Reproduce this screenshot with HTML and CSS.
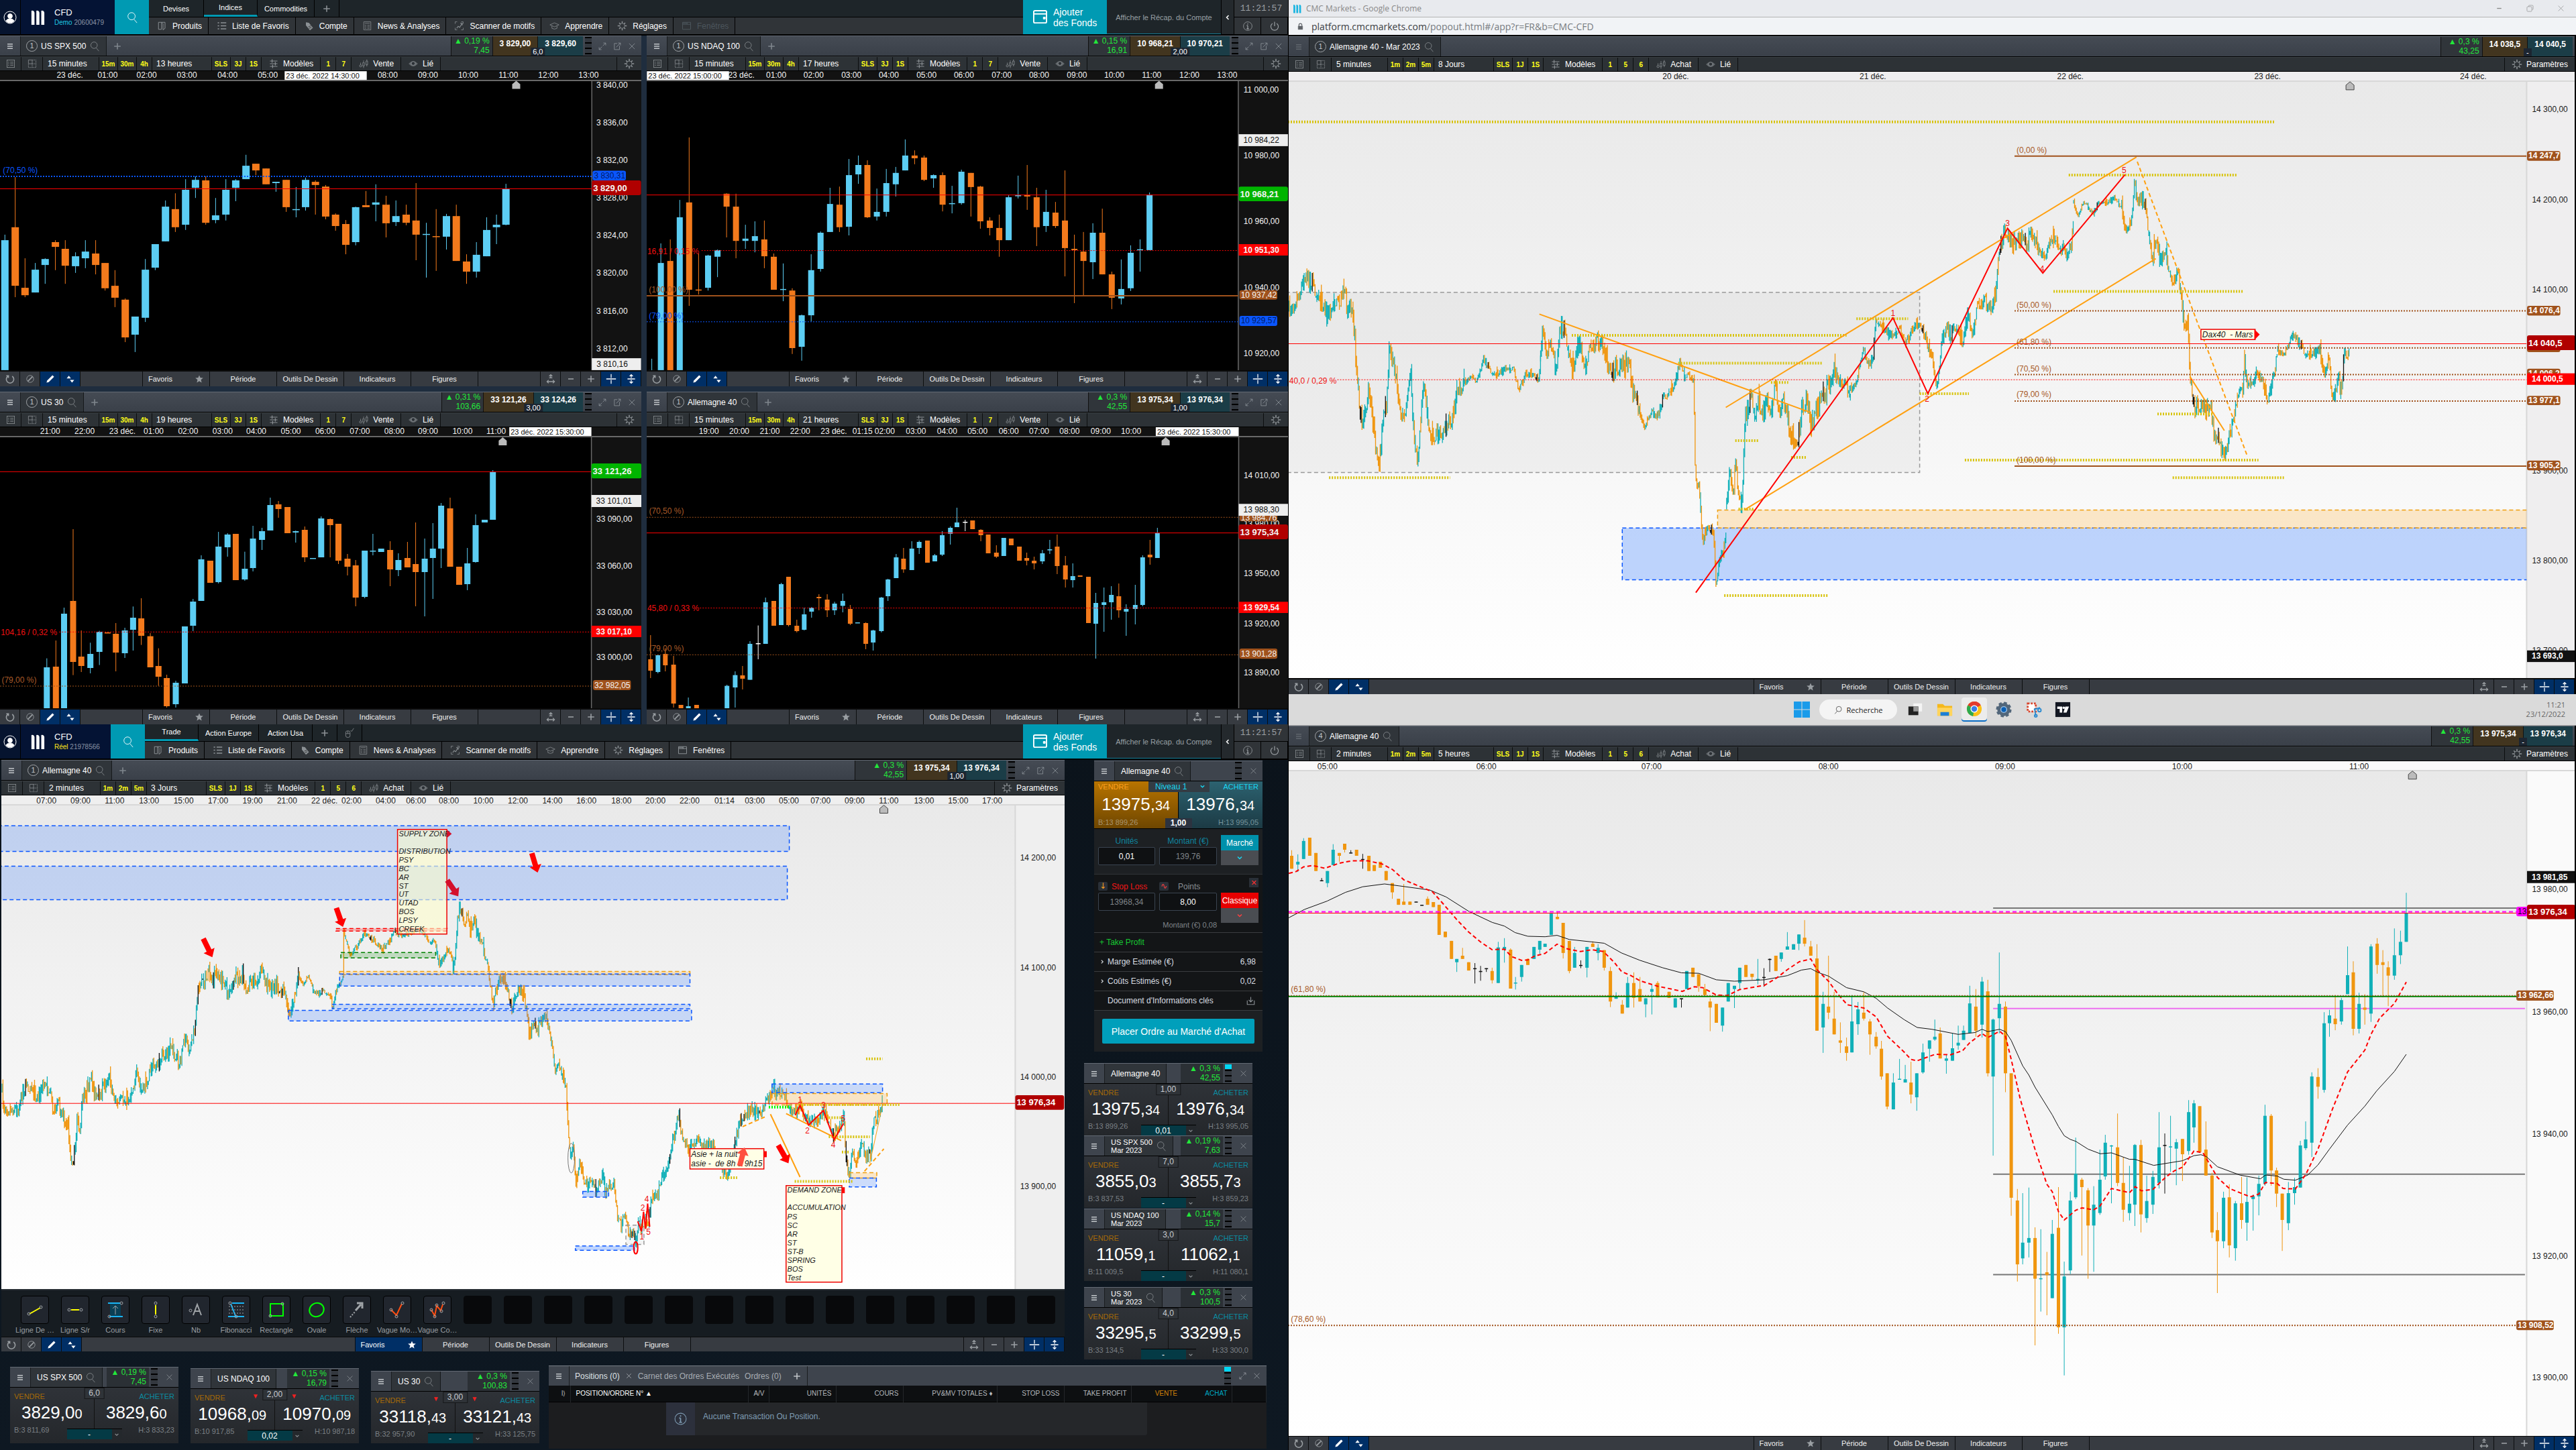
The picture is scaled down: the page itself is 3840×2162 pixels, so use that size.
FILE: index.html
```html
<!DOCTYPE html>
<html lang="fr">
<head>
<meta charset="utf-8">
<meta name="viewport" content="width=device-width, initial-scale=1">
<title>CMC Markets - CFD</title>
<link rel="stylesheet" href="styles.css">
</head>
<body>
<svg class="sprite" aria-hidden="true">
  <symbol id="menu" viewBox="0 0 20 20"><path d="M5 6h10M5 10h10M5 14h10" stroke-width="2"/></symbol>
  <symbol id="search" viewBox="0 0 20 20"><circle cx="9" cy="8" r="6"/><path d="M13 13l5 6"/></symbol>
  <symbol id="plus" viewBox="0 0 20 20"><path d="M10 4v12M4 10h12" stroke-width="2"/></symbol>
  <symbol id="minus" viewBox="0 0 20 20"><path d="M5 10h10" stroke-width="2"/></symbol>
  <symbol id="user" viewBox="0 0 20 20"><circle cx="10" cy="10" r="9"/><circle cx="10" cy="8" r="3.4" fill="currentColor"/><path d="M4 15c2-4 10-4 12 0c-3 4-9 4-12 0z" fill="currentColor"/></symbol>
  <symbol id="logo" viewBox="0 0 24 26"><path d="M2 2q4-1 5 3v20H2zM10 2q4-1 5 3v20h-5zM18 2q4-1 5 3v20h-5z" fill="currentColor" stroke="none"/></symbol>
  <symbol id="list" viewBox="0 0 20 20"><rect x="3" y="3" width="14" height="14"/><path d="M5 7h2M9 7h6M5 10h2M9 10h6M5 13h2M9 13h6"/></symbol>
  <symbol id="grid" viewBox="0 0 20 20"><path d="M3 3h7v7H3z"/><path d="M10 3h7v14H3v-7M10 10h7M10 10v7" stroke-dasharray="2 1"/></symbol>
  <symbol id="sliders" viewBox="0 0 20 20"><path d="M3 5h14M3 10h14M3 15h14M7 2v6M13 7v6M8 12v6" stroke-width="1.5"/></symbol>
  <symbol id="bars" viewBox="0 0 20 20"><circle cx="4.500" cy="14" r="2"/><path d="M4.500 8v4M10 4v3M10 14v4M16 2v3M16 12v3M8.500 8h3v6h-3zM14.500 5h3v7h-3z"/></symbol>
  <symbol id="eye" viewBox="0 0 20 20"><path d="M2 10q8-9 16 0q-8 9-16 0z" fill="currentColor" opacity=".6"/><circle cx="10" cy="9.500" r="3.500" fill="#2c3136"/></symbol>
  <symbol id="gear" viewBox="0 0 20 20"><circle cx="10" cy="10" r="5"/><path d="M10 1v4M10 15v4M1 10h4M15 10h4M4 4l2.500 2.500M13.500 13.500L16 16M16 4l-2.500 2.500M4 16l2.500-2.500" stroke-width="2"/></symbol>
  <symbol id="undo" viewBox="0 0 20 20"><path d="M6 5a7 7 0 1 0 8 0M3 4h4v4" stroke-width="2"/></symbol>
  <symbol id="ban" viewBox="0 0 20 20"><circle cx="10" cy="10" r="6.500"/><path d="M14.500 5.500l-9 9" stroke-width="2"/></symbol>
  <symbol id="pencil" viewBox="0 0 20 20"><path d="M3 17l1-4L14 3l3 3L7 16z" fill="currentColor" stroke="none"/></symbol>
  <symbol id="updown" viewBox="0 0 20 20"><path d="M3 9l4-5 4 5zM9 12h8l-4 5z" fill="currentColor" stroke="none"/></symbol>
  <symbol id="star" viewBox="0 0 20 20"><path d="M10 2l2.300 5.600 6 .4-4.700 3.900 1.600 6.100L10 14.600 4.800 18l1.600-6.100L1.700 8l6-.4z" fill="currentColor" stroke="none"/></symbol>
  <symbol id="fit" viewBox="0 0 20 20"><path d="M10 2v6M7 5l3-3 3 3M7 8h6M4 15h12M6 12l-3 3 3 3M14 12l3 3-3 3" stroke-width="1.600"/></symbol>
  <symbol id="cross" viewBox="0 0 20 20"><path d="M10 1v7M10 12v7M1 10h18" stroke-width="1.600"/></symbol>
  <symbol id="vert" viewBox="0 0 20 20"><path d="M3 10h14M10 2v6M10 12v6M7 5l3-3 3 3M7 15l3 3 3-3" stroke-width="1.600"/></symbol>
  <symbol id="expand" viewBox="0 0 20 20"><path d="M11 9l6-6M12 3h5v5M9 11l-6 6M8 17H3v-5"/></symbol>
  <symbol id="popout" viewBox="0 0 20 20"><path d="M10 4H4v13h11V9M8 12l9-9M12 3h5v5"/></symbol>
  <symbol id="close" viewBox="0 0 20 20"><path d="M4 4l12 12M16 4L4 16"/></symbol>
  <symbol id="doc" viewBox="0 0 20 20"><path d="M3 3h6v14H3zM9 3h7v12l-4 3V6L9 3" stroke-width="1.300"/></symbol>
  <symbol id="favs" viewBox="0 0 20 20"><path d="M2 4h3M8 4h11M2 10h3M8 10h11M2 16h3M8 16h11" stroke-width="2"/></symbol>
  <symbol id="tag" viewBox="0 0 20 20"><path d="M4 3l6 1 8 10-6 5L4 9z" fill="currentColor" stroke="none"/><path d="M9 12l5-2M10 15l5-2" stroke="#222"/></symbol>
  <symbol id="news" viewBox="0 0 20 20"><path d="M3 2h14v16H3zM5 5h10M5 9h3M10 9h5M5 12h3M10 12h5M5 15h3M10 15h5"/></symbol>
  <symbol id="scan" viewBox="0 0 20 20"><path d="M2 6V2h4M14 2h4v4M18 14v4h-4M6 18H2v-4"/><path d="M5 15l3-4 3 2 5-8M12 5h4v4" stroke-width="1.500"/></symbol>
  <symbol id="hat" viewBox="0 0 20 20"><path d="M1 8l9-4 9 4-9 4zM5 10v5q5 3 10 0v-5"/></symbol>
  <symbol id="window" viewBox="0 0 20 20"><path d="M2 3h16v14H2zM2 7h16M11 3v4M2 5h9" stroke-width="1.300"/></symbol>
  <symbol id="wallet" viewBox="0 0 22 24"><rect x="1" y="2" width="20" height="19" rx="2" stroke-width="2"/><path d="M1 7h20" stroke-width="2"/><path d="M16 12h3v3h-3z" fill="currentColor"/></symbol>
  <symbol id="info" viewBox="0 0 20 20"><circle cx="10" cy="10" r="8"/><path d="M10 9v6M8 9h2M8 15h4M10 5v2" stroke-width="1.600"/></symbol>
  <symbol id="power" viewBox="0 0 20 20"><path d="M6 5a7 7 0 1 0 8 0M10 2v8" stroke-width="1.500"/></symbol>
  <symbol id="left" viewBox="0 0 20 20"><path d="M13 4l-6 6 6 6" stroke-width="3"/></symbol>
  <symbol id="down" viewBox="0 0 20 20"><path d="M4 7l6 6 6-6" stroke-width="3"/></symbol>
  <symbol id="right" viewBox="0 0 20 20"><path d="M7 4l6 6-6 6" stroke-width="3"/></symbol>
  <symbol id="mouse" viewBox="0 0 20 20"><rect x="3" y="6" width="8" height="12" rx="3"/><path d="M3 11h8M7 6v5M12 5l2 2 4-6"/></symbol>
  <symbol id="save" viewBox="0 0 20 20"><path d="M3 9v8h14V9M10 2v10M6 8l4 4 4-4" stroke-width="1.500"/></symbol>
  <symbol id="lock" viewBox="0 0 20 20"><path d="M4 9h12v9H4z" fill="currentColor"/><path d="M6 9V6a4 4 0 0 1 8 0v3" stroke-width="2"/></symbol>
  <symbol id="restore" viewBox="0 0 20 20"><rect x="3" y="6" width="11" height="11" rx="2"/><path d="M7 6V4q0-1 2-1h6q2 0 2 2v6q0 2-2 2"/></symbol>
</svg>

<main class="desk">
  <div class="screen">
    <section class="space">
      <header class="top">
        <button class="me" aria-label="Profil"><svg><use href="#user"/></svg></button>
        <div class="brand wide"><svg><use href="#logo"/></svg><p>CFD<small><b class="demo">Demo</b> 20600479</small></p></div>
        <button class="find" aria-label="Rechercher"><svg><use href="#search"/></svg></button>
        <div class="menus">
          <div class="tabs">
            <button class="w82">Devises</button><button class="on">Indices</button><button class="w85">Commodities</button><button class="w37" aria-label="Ajouter"><svg><use href="#plus"/></svg></button>
          </div>
          <nav class="off" data-nav></nav>
        </div>
        <button class="fund"><svg><use href="#wallet"/></svg><span>Ajouter<br>des Fonds</span></button>
        <a class="recap" href="#">Afficher le Récap. du Compte</a>
        <button class="fold" aria-label="Replier"><svg><use href="#left"/></svg></button>
        <div class="clock"><time>11:21:57</time><button aria-label="Info"><svg><use href="#info"/></svg></button><button aria-label="Quitter"><svg><use href="#power"/></svg></button></div>
      </header>
      <div class="quad">
        <section class="panel dark" id="spx"></section>
        <section class="panel dark" id="ndaq"></section>
        <section class="panel dark" id="us30"></section>
        <section class="panel dark" id="dax"></section>
      </div>
    </section>

    <section class="space night">
      <header class="top">
        <button class="me" aria-label="Profil"><svg><use href="#user"/></svg></button>
        <div class="brand"><svg><use href="#logo"/></svg><p>CFD<small><b class="real">Réel</b> 21978566</small></p></div>
        <button class="find" aria-label="Rechercher"><svg><use href="#search"/></svg></button>
        <div class="menus">
          <div class="tabs">
            <button class="on">Trade</button><button class="w90">Action Europe</button><button class="w80">Action Usa</button><button class="w37" aria-label="Ajouter"><svg><use href="#plus"/></svg></button><button class="w37" aria-label="Souris"><svg><use href="#mouse"/></svg></button>
          </div>
          <nav data-nav></nav>
        </div>
        <button class="fund"><svg><use href="#wallet"/></svg><span>Ajouter<br>des Fonds</span></button>
        <a class="recap" href="#">Afficher le Récap. du Compte</a>
        <button class="fold" aria-label="Replier"><svg><use href="#left"/></svg></button>
        <div class="clock"><time>11:21:57</time><button aria-label="Info"><svg><use href="#info"/></svg></button><button aria-label="Quitter"><svg><use href="#power"/></svg></button></div>
      </header>
      <div class="trade">
        <section class="panel light" id="dax2m"></section>
        <aside class="side">
          <form class="ticket">
            <div class="thead"><button type="button" class="cell" aria-label="Menu"><svg><use href="#menu"/></svg></button><h2>Allemagne 40 <svg><use href="#search"/></svg></h2><i class="depth"></i><button type="button" class="x" aria-label="Fermer"><svg><use href="#close"/></svg></button></div>
            <div class="quote">
              <button type="button" class="sell"><em>VENDRE</em><strong>13975,<small>34</small></strong><span>B:13 899,26</span></button>
              <button type="button" class="buy"><em>ACHETER</em><strong>13976,<small>34</small></strong><span>H:13 995,05</span></button>
              <select class="level" aria-label="Niveau"><option>Niveau 1</option></select>
              <svg class="lv"><use href="#down"/></svg>
              <b class="mid">1,00</b>
            </div>
            <div class="order">
              <label>Unités<input value="0,01"></label>
              <label>Montant (€)<input class="dim" value="139,76"></label>
              <div class="kind"><button type="button">Marché</button><button type="button" class="dd" aria-label="Type"><svg><use href="#down"/></svg></button></div>
            </div>
            <div class="order stop">
              <label class="red"><span><i class="ico">↓</i>Stop Loss</span><input class="dim" value="13968,34"></label>
              <label class="grey"><span><i class="ico r">∿</i>Points</span><input value="8,00"></label>
              <div class="kind"><button type="button" class="kx" aria-label="Retirer">✕</button><button type="button" class="cl">Classique</button><button type="button" class="dd" aria-label="Type de stop"><svg><use href="#down"/></svg></button></div>
              <p>Montant (€) 0,08</p>
            </div>
            <a class="line tp" href="#">+ Take Profit</a>
            <a class="line" href="#"><svg><use href="#right"/></svg>Marge Estimée (€)<b>6,98</b></a>
            <a class="line" href="#"><svg><use href="#right"/></svg>Coûts Estimés (€)<b>0,02</b></a>
            <a class="line doc" href="#">Document d'Informations clés<svg class="sv"><use href="#save"/></svg></a>
            <button type="button" class="place">Placer Ordre au Marché d'Achat</button>
          </form>
          <div class="stack" id="stack"></div>
        </aside>
      </div>
      <div class="dock">
        <div class="row" id="row"></div>
        <section class="pos">
          <div class="phead"><button class="cell" aria-label="Menu"><svg><use href="#menu"/></svg></button><button class="ptab on">Positions (0) <svg><use href="#close"/></svg></button><button class="ptab">Carnet des Ordres Exécutés</button><button class="ptab">Ordres (0)</button><button class="cell" aria-label="Ajouter"><svg><use href="#plus"/></svg></button><i class="depth hot"></i><svg><use href="#expand"/></svg><svg><use href="#close"/></svg></div>
          <table>
            <colgroup><col class="c1"><col class="c2"><col class="c3"><col class="c4"><col class="c4"><col class="c5"><col class="c4"><col class="c4"><col class="c6"><col class="c6"><col></colgroup>
            <thead><tr><th>I⟩</th><th class="lft">POSITION/ORDRE N° <span>▲</span></th><th>A/V</th><th>UNITÉS</th><th>COURS</th><th>PV&amp;MV TOTALES ♦</th><th>STOP LOSS</th><th>TAKE PROFIT</th><th class="or">VENTE</th><th class="bl">ACHAT</th><th></th></tr></thead>
          </table>
          <p class="none"><svg><use href="#info"/></svg><span>Aucune Transaction Ou Position.</span></p>
        </section>
      </div>
    </section>
  </div>

  <div class="screen right">
    <section class="chrome">
      <div class="wt"><svg class="fav"><use href="#logo"/></svg><span>CMC Markets - Google Chrome</span><button aria-label="Réduire"><svg><use href="#minus"/></svg></button><button aria-label="Restaurer"><svg><use href="#restore"/></svg></button><button aria-label="Fermer"><svg><use href="#close"/></svg></button></div>
      <div class="url"><svg><use href="#lock"/></svg><span>platform.cmcmarkets.com<i>/popout.html#/app?r=FR&amp;b=CMC-CFD</i></span></div>
      <section class="panel light pop" id="daxf"></section>
    </section>
    <footer class="task">
      <svg class="os" viewBox="0 0 24 24"><path d="M0 0h11.500v11.500H0zM12.500 0H24v11.500H12.500zM0 12.500h11.500V24H0zM12.500 12.500H24V24H12.500z" fill="#1a9bea"/></svg>
      <button class="pill"><svg><use href="#search"/></svg>Recherche</button>
      <svg viewBox="0 0 26 26"><path d="M10 3h14v13H10z" fill="#f4f4f4"/><path d="M2 8h16v14H2z" fill="#222"/><path d="M10 8h8v8h-8z" fill="#999"/></svg>
      <svg viewBox="0 0 26 26"><path d="M1 4h9l3 3h12v16H1z" fill="#f5b81c"/><path d="M1 10h24v13H1z" fill="#ffd45c"/><path d="M6 17h14v6H6z" fill="#1c7fd6"/></svg>
      <span class="act"><svg viewBox="0 0 26 26"><circle cx="13" cy="13" r="12" fill="#fbc116"/><path d="M13 13L2.600 7A12 12 0 0 1 23.400 7z" fill="#e33b2e"/><path d="M13 1a12 12 0 0 1 10.400 6H13z" fill="#e33b2e"/><path d="M13 13L2.600 7a12 12 0 0 0 8.400 17.800z" fill="#2da94f"/><circle cx="13" cy="13" r="6" fill="#fff"/><circle cx="13" cy="13" r="4.600" fill="#3a7ee8"/></svg></span>
      <svg viewBox="0 0 26 26"><circle cx="13" cy="13" r="8" fill="#9fc3e6" stroke="#52667a" stroke-width="5"/><circle cx="13" cy="13" r="11" fill="none" stroke="#52667a" stroke-width="3" stroke-dasharray="5 3.600"/><circle cx="13" cy="13" r="4" fill="#0a5fb4"/></svg>
      <svg viewBox="0 0 26 26"><path d="M4 3h13v13H4z" fill="#fff" stroke="#d8452c" stroke-width="3" stroke-dasharray="3 2"/><path d="M14 13l10-3M15 11l2 12" stroke="#2b8bd0" stroke-width="2"/><circle cx="23" cy="14" r="2.500" fill="none" stroke="#2b8bd0" stroke-width="2"/><circle cx="17" cy="23" r="2" fill="none" stroke="#2b8bd0" stroke-width="2"/></svg>
      <svg viewBox="0 0 26 26"><path d="M1 1h24v24H1z" fill="#131722"/><path d="M4 8h8v10H8v-6H4zM17 8h6l-4 10h-5z" fill="#fff"/><circle cx="14.500" cy="10" r="2" fill="#fff"/></svg>
      <p class="when">11:21<br>23/12/2022</p>
    </footer>
    <section class="panel light last" id="dax5h"></section>
  </div>
</main>
<script src="app.js"></script>
</body>
</html>
```
FILE: styles.css
```css
* { box-sizing: border-box; }
body { margin: 0; background: #0d151e; color: #fff; font: 12px "Liberation Sans", Arial, sans-serif; }
button, input, select { font: inherit; color: inherit; background: none; border: 0; margin: 0; padding: 0; border-radius: 0; appearance: none; }
a { color: inherit; text-decoration: none; }
h2, p { margin: 0; font: inherit; }
svg { display: block; width: 16px; height: 16px; flex: none; fill: none; stroke: currentColor; }
.sprite { display: none; }
.desk { display: grid; grid-template-columns: minmax(0, 1fr) minmax(0, 1fr); }
.screen { display: flex; flex-direction: column; min-width: 0; }
.space { background: #1f2d3e; }
.night { background: linear-gradient(#0b131b, #0e1822); flex: 1; }

/* platform header */
.top { display: flex; height: 53px; background: #1e2529; border-bottom: 2px solid #000; box-shadow: inset 0 -1px #17809a; }
.me { width: 31px; background: #06142f; border-right: 1px solid #000; display: grid; place-items: center; }
.me svg { width: 20px; height: 20px; }
.brand { width: 134px; background: #041334; display: flex; align-items: center; gap: 14px; padding-left: 14px; }
.brand.wide { width: 140px; }
.brand svg { width: 22px; height: 24px; }
.brand p { font-size: 13px; line-height: 15px; }
.brand small { display: block; font-size: 10px; color: #8a93a5; }
.brand b { font-weight: normal; }
.demo { color: #1fc7e0; }
.real { color: #ffe81a; }
.find, .fund { background: #009ab3; }
.find { width: 51px; display: grid; place-items: center; }
.find svg { width: 18px; height: 18px; }
.menus { flex: 1; min-width: 0; }
.tabs { display: flex; height: 26px; border-bottom: 1px solid #000; font-size: 11px; }
.tabs button { width: 80px; border-right: 1px solid #000; display: grid; place-items: center; }
.tabs .w82 { width: 82px; }
.tabs .w85 { width: 85px; }
.tabs .w90 { width: 90px; }
.tabs .w37 { width: 37px; color: #8b9094; }
.tabs .on { border-bottom: 3px solid #009ab3; }
.menus nav { display: flex; height: 25px; background: #303438; }
.menus nav a { display: flex; align-items: center; gap: 8px; padding: 0 9px 0 12px; border-right: 1px solid #000; white-space: nowrap; }
.menus nav svg { width: 15px; height: 15px; color: #8b9094; }
.menus .off a:last-child, .menus .off a:last-child svg { color: #4c555c; }
.fund { width: 125px; display: flex; align-items: center; gap: 9px; padding-left: 15px; font-size: 14px; line-height: 16px; text-align: left; }
.fund svg { width: 21px; height: 23px; }
.recap { width: 171px; display: grid; place-items: center; color: #99a0a5; border-right: 1px solid #000; white-space: nowrap; font-size: 11px; }
.fold { width: 19px; border-right: 1px solid #000; display: grid; place-items: center; background: #24292d; }
.fold svg { width: 10px; height: 12px; }
.clock { width: 80px; display: grid; grid-template-columns: 1fr 1fr; grid-template-rows: 26px 25px; background: #303438; color: #9a9fa3; }
.clock time { grid-column: 1 / 3; font: 13px/25px "Liberation Mono", monospace; text-align: center; border-bottom: 1px solid #000; }
.clock button { display: grid; place-items: center; border-right: 1px solid #000; }

/* chart windows */
.quad { display: grid; grid-template-columns: minmax(0, 1fr) minmax(0, 1fr); gap: 8px; }
.panel { display: flex; flex-direction: column; background: #000; min-width: 0; }
.bar { display: flex; height: 31px; border-top: 1px solid #626973; border-bottom: 1px solid #000; background: linear-gradient(#454b54, #3a4049); }
.cell { width: 31px; display: grid; place-items: center; border-right: 1px solid #1a1d20; color: #c0c4c8; }
.bar .name { display: flex; align-items: center; gap: 5px; padding: 0 9px 0 8px; background: #30353a; border-right: 1px solid #15181a; white-space: nowrap; }
.bar .name svg { color: #8b9094; }
.num { width: 17px; height: 17px; border: 1px solid #a0a4a8; border-radius: 50%; color: #c0c4c8; font-size: 11px; line-height: 15px; text-align: center; }
.bar .plus { color: #7f868d; width: 31px; display: grid; place-items: center; }
.grow { flex: 1; }
.chg { width: 63px; padding-right: 4px; background: #30353a; color: #22e83a; text-align: right; line-height: 14px; border-left: 1px solid #111; border-right: 1px solid #111; }
#dax2m .chg { width: 78px; }
.pair { display: flex; position: relative; font-weight: bold; line-height: 20px; }
.pair button { padding: 0 10px 8px; font-weight: bold; white-space: nowrap; }
.pair .s { background: #42351f; border-right: 1px solid #111; }
.pair .b { background: #1b3d47; }
.pair i { position: absolute; left: 50%; bottom: 0; transform: translateX(-50%); min-width: 12px; padding: 0 3px; font: 11px/12px "Liberation Sans", Arial, sans-serif; background: #1c2531; text-align: center; }
.depth { width: 10px; margin: 1px 3px; background: repeating-linear-gradient(#000 0 2px, #33383f 2px 8px); }
.depth.hot { background: linear-gradient(#00d8f5 0 7px, transparent 7px), repeating-linear-gradient(#000 0 2px, #33383f 2px 8px); }
.wins { display: flex; align-items: center; gap: 8px; padding: 0 7px 0 6px; color: #9aa0a6; }
.wins svg { width: 14px; height: 14px; }
.tools { display: flex; height: 22px; background: #2d3236; border-top: 1px solid #3d4246; border-bottom: 1px solid #000; }
.tools > * { border-right: 1px solid #0c0e0f; display: flex; align-items: center; }
.tools svg { color: #8b9094; }
.tools .ic { width: 32px; justify-content: center; }
.tools select { width: 84px; padding-left: 7px; }
.tools .rng { width: 89px; padding-left: 6px; }
.tools .y { width: 23px; justify-content: center; color: #ffff19; font-size: 10px; font-weight: bold; }
.tools .y.m { width: 28px; }
.tools .wd { gap: 6px; padding: 0 10px; white-space: nowrap; }
.tools .grow { border: 0; }
.tools .set { border-left: 1px solid #0c0e0f; border-right: 0; gap: 6px; padding: 0 10px; white-space: nowrap; }
.chart { width: 100%; height: auto; stroke: none; border-bottom: 0; }
.foot { display: flex; height: 24px; border-top: 2px solid #0a0a0a; background: #373b41; font-size: 11px; }
.light .foot { height: 22px; border-top-width: 1px; }
.light.pop .foot { height: 24px; border-top-width: 2px; }
.light.last .foot { height: 21px; }
.foot > * { display: grid; place-items: center; border-right: 1px solid #0c0e0f; }
.foot .k { width: 30px; color: #9a9fa3; }
.foot .k.on, .foot .g.on { background: #002f66; color: #fff; }
.foot .g { width: 100px; color: #f0f0f0; }
.foot .f { display: flex; align-items: center; justify-content: space-between; padding: 0 8px; }
.foot .f svg { width: 14px; height: 14px; color: #9a9fa3; }
.foot .g.on svg { color: #fff; }

/* favourite tools */
.favs { display: flex; height: 71px; background: #161c21; border-top: 2px solid #272e33; padding: 8px 21px 0 20px; overflow: hidden; }
.favs div { width: 60px; flex: none; font-size: 11px; color: #9a9fa3; text-align: center; line-height: 18px; white-space: nowrap; }
.favs button { display: grid; place-items: center; width: 42px; height: 42px; margin: 0 auto; background: #21262e; border: 1px solid #000; border-radius: 4px; }
.favs .e button { background: #08090b; border-color: #08090b; }
.favs svg { width: 28px; height: 28px; }

/* workspace below the header */
.trade { display: flex; padding-left: 2px; }
.trade .panel { flex: 1; align-self: flex-start; }
.side { width: 333px; padding: 1px 0 0 29px; }
.ticket, .tile, .stack { width: 251px; }
.ticket { margin-left: 15px; background: #1d2023; }
.thead { display: flex; height: 31px; border-top: 1px solid #626973; border-bottom: 1px solid #000; background: #3e444d; }
.thead h2 { flex: none; display: flex; align-items: center; gap: 5px; padding: 0 9px; background: #30353a; border-right: 1px solid #15181a; margin-right: auto; }
.thead h2 svg { color: #8b9094; }
.x { width: 28px; display: grid; place-items: center; color: #9aa0a6; }
.x svg { width: 13px; height: 13px; }
.quote { position: relative; display: grid; grid-template-columns: 1fr 1fr; height: 71px; border-bottom: 1px solid #000; }
.quote button { display: flex; flex-direction: column; justify-content: space-between; padding: 2px 6px; font-size: 11px; text-align: left; line-height: 13px; }
.quote em { font-style: normal; font-size: 11px; }
.quote strong { font: 26px/34px "Liberation Sans", Arial, sans-serif; text-align: center; }
.quote small { font-size: 20px; }
.quote span { color: #a89570; }
.quote .sell { background: linear-gradient(#b87400, #6e4600); border-right: 1px solid #000; }
.quote .sell em { color: #ffa01e; }
.quote .buy { background: linear-gradient(#2c6270, #1c3a44); text-align: right; }
.quote .buy em { color: #19d7f2; }
.quote .buy span { color: #76949c; }
.level { position: absolute; left: 81px; top: 0; width: 91px; height: 16px; padding-left: 10px; background: #333c44; color: #19d7f2; }
.lv { position: absolute; left: 157px; top: 3px; width: 9px; height: 9px; color: #19d7f2; }
.mid { position: absolute; left: 50%; bottom: 0; transform: translateX(-50%); width: 40px; line-height: 15px; background: #2c3340; text-align: center; }
.order { display: grid; grid-template-columns: 85px 86px 56px; gap: 0 6px; padding: 9px 6px 0; height: 67px; }
.order label { color: #0f86a0; text-align: center; line-height: 18px; }
.order input { display: block; width: 100%; height: 27px; background: #0f1113; border: 1px solid #3a4450; border-radius: 2px; text-align: center; color: #fff; }
.order .dim { color: #7f8489; }
.kind { display: flex; flex-direction: column; position: relative; }
.kind button { height: 23px; background: #0091ab; }
.kind .dd { height: 22px; background: #4a4d52; display: grid; place-items: center; color: #19d7f2; }
.kind svg { width: 10px; height: 10px; }
.order.stop { height: 87px; border-top: 1px solid #2f3337; background: #131517; padding-top: 8px; align-content: start; }
.order.stop span { display: flex; align-items: center; gap: 6px; height: 19px; }
.red { color: #f21616; }
.order .red { color: #f21616; }
.order .grey { color: #8a8f94; }
.grey span { gap: 14px !important; }
.ico { width: 14px; height: 13px; background: #2a3038; color: #ffa01e; font: 12px/12px "DejaVu Sans", sans-serif; border-radius: 2px; }
.ico.r { color: #f24040; }
.kind .cl { margin-top: 19px; background: #e80000; height: 23px; }
.stop .dd { color: #ff4040; }
.kind .kx { position: absolute; right: 0; top: -3px; width: 14px; height: 14px; background: #2a3038; color: #ff3030; font: 11px/13px "DejaVu Sans", sans-serif; }
.order.stop p { grid-column: 1 / 3; text-align: right; color: #7f8489; font-size: 11px; margin-top: -3px; }
.line { display: flex; align-items: center; gap: 4px; height: 29px; padding: 0 10px 0 8px; background: #131517; border-top: 1px solid #3a3d40; color: #d8dde2; }
.line b { margin-left: auto; font-weight: normal; }
.line svg { width: 8px; height: 10px; }
.line .sv { width: 15px; height: 15px; margin-left: auto; color: #8a8f94; }
.doc { padding-left: 20px; }
.tp { color: #16c832; }
.place { display: block; width: 227px; height: 37px; margin: 0 auto; border-radius: 2px; background: #009fbb; font-size: 14px; white-space: nowrap; }
.ticket .doc { margin-bottom: 12px; border-bottom: 1px solid #3a3d40; height: 30px; }
.ticket { padding-bottom: 12px; }

/* price tiles */
.stack { margin-top: 17px; }
.tile { background: linear-gradient(#33373d, #24272b); }
.thead .t2 { font-size: 11px; line-height: 12px; }
.thead .chg { border: 0; background: #2b3035; }
.tile .quote { height: 77px; border: 0; }
.tile .quote button { background: none; padding: 8px 6px 9px; line-height: 10px; }
.tile .quote span { color: #7b8085; }
.tile .quote .sell { border-right: 1px solid #111; }
.tile .quote .sell em { color: #a66a08; }
.tile .quote .buy em { color: #0c8ca0; }
.tile .mid { top: 0; bottom: auto; width: auto; padding: 0 6px; font-weight: normal; background: #2f3338; border: 1px solid #16181a; color: #c8ccd0; }
.tile .mid.dn::before, .tile .mid.dn::after { content: "▼"; position: absolute; top: 2px; color: #f02020; font-size: 10px; }
.tile .mid.dn::before { left: -16px; }
.tile .mid.dn::after { right: -16px; }
.tile .qty { position: absolute; left: 50%; bottom: 0; transform: translateX(-50%); display: flex; height: 16px; border-top: 1px solid #000; }
.tile .qty input { width: 67px; background: #043a45; text-align: center; }
.tile .qty i { width: 15px; background: #24282c; display: grid; place-items: center; color: #8b9094; }
.tile .qty svg { width: 8px; height: 8px; }
.stack .tile:nth-child(3) { margin-top: 1px; }
.stack .tile:nth-child(4) { margin-top: 9px; }
.dock { display: flex; gap: 14px; padding: 9px 32px 2px 15px; align-items: flex-start; }
.row { display: flex; gap: 18px; padding-top: 2px; }
.row .tile:nth-child(2) { margin-top: 2px; }
.row .tile:nth-child(3) { margin-top: 6px; }
.pos { flex: 1; min-width: 0; background: #1c1d1f; height: 124px; }
.phead { display: flex; align-items: center; height: 30px; background: #3e444d; border-top: 1px solid #777d85; padding-right: 8px; gap: 8px; color: #a8adb3; white-space: nowrap; }
.phead .cell, .phead .ptab { height: 29px; }
.ptab { display: flex; align-items: center; gap: 8px; }
.ptab svg { width: 11px; height: 11px; }
.phead .on { color: #dfe2e5; }
.phead > svg { width: 13px; height: 13px; }
.phead .depth { margin-left: auto; height: 28px; }
.pos table { width: 100%; table-layout: fixed; border-collapse: collapse; background: #0d0f11; border-bottom: 1px solid #000; }
.pos th { height: 24px; padding: 0 6px 0 0; border-right: 1px solid #24272a; font-size: 10px; font-weight: normal; text-align: right; color: #b4b8bc; white-space: nowrap; }
.pos .lft { text-align: left; color: #fff; padding-left: 8px; }
.pos .or { color: #d48208; border: 0; }
.pos .bl { color: #00a8c4; }
.c1 { width: 32px; } .c2 { width: 265px; } .c3 { width: 31px; } .c4 { width: 100px; } .c5 { width: 140px; } .c6 { width: 75px; }
.none { display: flex; width: 67%; margin-left: 175px; height: 49px; background: #25272a; color: #7f9db5; border-radius: 0 0 3px 3px; }
.none svg { width: 43px; height: 49px; padding: 14px 10px; background: #2c303c; }
.none span { padding: 14px 12px; }

/* browser window */
.right { padding-left: 1px; background: #000; }
.chrome { background: #111; }
.wt { display: flex; align-items: center; height: 26px; padding-left: 5px; background: #e8eaee; color: #888; border-bottom: 1px solid #b4b4b4; font: 12px "Open Sans", "Noto Sans", sans-serif; }
.wt span { flex: 1; padding-left: 6px; }
.wt .fav { width: 15px; height: 14px; color: #18b4e0; }
.wt button { width: 46px; display: grid; place-items: center; }
.wt button svg { width: 13px; height: 13px; }
.url { display: flex; align-items: center; gap: 11px; height: 28px; padding: 0 12px; background: #f1f3f6; color: #3c4043; border-bottom: 2px solid #000; font: 14px "Open Sans", "Noto Sans", sans-serif; }
.url svg { width: 11px; height: 13px; color: #5f6368; }
.url i { font-style: normal; color: #777b80; }
.pop, .last { padding-right: 2px; }
.pop .bar .cell, .last .bar .cell { color: #60666d; }
.pop .pair, .last .pair { margin-right: 3px; }
.task { display: flex; justify-content: center; align-items: center; gap: 18px; height: 47px; position: relative; background: #dadada; color: #222; border-bottom: 1px solid #aaa; stroke: none; font: 11px "Open Sans", "Noto Sans", sans-serif; }
.task > svg, .task .act svg { width: 26px; height: 24px; stroke: none; }
.task .os { width: 24px; }
.pill { display: flex; align-items: center; gap: 6px; width: 116px; height: 30px; padding: 0 22px; margin: 0 -4px; border-radius: 15px; background: #f4f4f4; }
.pill svg { width: 13px; height: 13px; transform: scaleX(-1); }
.act { padding: 5px 6px 7px; margin: 0 -6px; border-radius: 4px; background: #ececec; box-shadow: inset 0 -2px #0a6cc4; }
.when { position: absolute; right: 16px; top: 9px; text-align: right; line-height: 14px; color: #666; }

/* chart drawing */
.chart text { font: 12px "Liberation Sans", Arial, sans-serif; dominant-baseline: central; fill: #1a1a1a; }
.dark .chart text { fill: #f4f4f4; }
.chart .mid-t { text-anchor: middle; }
.chart .big { font-size: 13px; font-weight: bold; }
.chart .bold { font-weight: bold; }
.chart .it { font-style: italic; white-space: pre; }
.chart .small { font-size: 11px; }
.chart .t-white { fill: #fff !important; }
.chart .t-black { fill: #111 !important; }
.chart .t-brown { fill: #a85a28 !important; }
.chart .t-blue { fill: #0a56ff !important; }
.chart .t-navy { fill: #001c66 !important; }
.chart .t-red { fill: #f01010 !important; }
.f-white { fill: #eee; } .f-dred { fill: #b00000; } .f-red { fill: #ff0000; } .f-green { fill: #00b400; } .f-brown { fill: #a0521c; } .f-blue { fill: #0a56ff; } .f-black { fill: #111; } .f-mag { fill: #ff00ff; } .f-tip { fill: #fff; }
.s-red { stroke: #f00; } .s-brown { stroke: #a0521c; } .s-blue { stroke: #0a56ff; } .s-mag { stroke: #f0f; } .s-vio { stroke: #ec6ff0; } .s-green { stroke: #008000; } .s-grey { stroke: #777; } .s-black { stroke: #111; } .s-or { stroke: #ffa010; } .s-yel { stroke: #d8c30c; stroke-width: 4; stroke-dasharray: 2 2; } .s-lime { stroke: #0f0; stroke-width: 4; stroke-dasharray: 2 2; }
.w2 { stroke-width: 2; } .w3 { stroke-width: 3; }
.dot { stroke-dasharray: 2 2; } .dash { stroke-dasharray: 6 4; }
.zone { stroke-dasharray: 6 4; stroke-width: 1.500; }
.z-blue { fill: rgba(60, 125, 255, .24); stroke: #0a56ff; }
.z-deep { fill: rgba(70, 135, 255, .34); stroke: #0a56ff; }
.z-or { fill: rgba(255, 175, 50, .25); stroke: #f0a010; }
.z-green { fill: rgba(0, 130, 0, .2); stroke: #008000; }
.z-red { fill: rgba(255, 0, 0, .25); stroke: #f00; }
.z-grey { fill: rgba(0, 0, 0, .035); stroke: #999; }
.note { fill: #ffffe6; stroke: #e00; stroke-width: 1.500; }
.note.fade { fill: rgba(255, 255, 205, .6); }
.arrow { fill: #f00; } .arrow.fade { fill: #ff5040; } .arrow.deep { fill: #d4102c; }
```
FILE: app.js
```js
const ic = n => `<svg><use href="#${n}"/></svg>`;

/* navigation shared by both workspaces */
const NAV = [['doc', 'Produits'], ['favs', 'Liste de Favoris'], ['tag', 'Compte'], ['news', 'News & Analyses'], ['scan', 'Scanner de motifs'], ['hat', 'Apprendre'], ['gear', 'Réglages'], ['window', 'Fenêtres']];
document.querySelectorAll('[data-nav]').forEach(n => {
  n.innerHTML = NAV.map(([i, t]) => `<a href="#">${ic(i)}${t.replace('&', '&amp;')}</a>`).join('');
});

const FAV = [
  ['Ligne De …', '<path d="M6 20l16-9" stroke="#ff0" stroke-width="2"/><circle cx="5" cy="20" r="2"/><circle cx="23" cy="10" r="2"/>'],
  ['Ligne S/r', '<path d="M8 14h12" stroke="#ff0" stroke-width="2"/><circle cx="5" cy="14" r="2"/><circle cx="23" cy="14" r="2"/>'],
  ['Cours', '<path d="M6 4h16v20H6z" fill="#0a3f55" stroke="none"/><path d="M3 4h18M5 24h20" stroke="#19b4f5" stroke-width="2"/><path d="M14 21V8M10 12l4-4 4 4"/><circle cx="23" cy="4" r="2"/><circle cx="5" cy="24" r="2"/>'],
  ['Fixe', '<path d="M14 7v14" stroke="#ff0" stroke-width="2"/><circle cx="14" cy="4" r="2"/><circle cx="14" cy="24" r="2"/>'],
  ['Nb', '<circle cx="6" cy="15" r="2"/><path d="M10 22l6-16 6 16M12 16h8" stroke-width="2"/>'],
  ['Fibonacci', '<path d="M8 4h18M2 24h24M6 5l7 18" stroke="#19b4f5" stroke-width="2"/><path d="M3 9h23M3 14h23M3 19h23" stroke-dasharray="2 2"/><circle cx="5" cy="4" r="2"/><circle cx="14" cy="24" r="2"/>'],
  ['Rectangle', '<path d="M5 5h19v18H5z" stroke="#0f0" stroke-width="2"/><circle cx="23" cy="5" r="2"/><circle cx="5" cy="23" r="2"/>'],
  ['Ovale', '<ellipse cx="14" cy="14" rx="11" ry="10" stroke="#0f0" stroke-width="2" transform="rotate(-30 14 14)"/>'],
  ['Flèche', '<path d="M4 25l8-9" stroke-dasharray="2 2" stroke-width="2"/><path d="M12 15l8-9M14 4h8v8" stroke-width="3"/>'],
  ['Vague Mo…', '<path d="M5 14l8 8 8-17" stroke="#ff4d10" stroke-width="2"/><circle cx="5" cy="14" r="2"/><circle cx="13" cy="24" r="2"/><circle cx="22" cy="4" r="2"/>'],
  ['Vague Co…', '<path d="M5 14l5 9 3-15 6 7 3-9" stroke="#ff4d10" stroke-width="2"/><circle cx="5" cy="14" r="2"/><circle cx="10" cy="24" r="2"/><circle cx="13" cy="7" r="2"/><circle cx="20" cy="16" r="2"/><circle cx="23" cy="4" r="2"/>']
];
const favStrip = () => '<div class="favs">' + Array.from({ length: 26 }, (_, i) => FAV[i]
  ? `<div><button aria-label="${FAV[i][0]}"><svg viewBox="0 0 28 28" color="#a0a4a8">${FAV[i][1]}</svg></button>${FAV[i][0]}</div>`
  : '<div class="e"><button aria-label="Vide"></button></div>').join('') + '</div>';

function panel(id, o) {
  const y = (t, m) => `<button class="y${m ? ' m' : ''}">${t}</button>`;
  const k = (n, on) => `<button class="k${on ? ' on' : ''}" aria-label="${n}">${ic(n)}</button>`;
  document.getElementById(id).innerHTML = `
  <div class="bar"><button class="cell" aria-label="Menu">${ic('menu')}</button>
    <button class="name"><span class="num">${o.n || 1}</span>${o.name} ${ic('search')}</button>
    ${o.pop ? '' : `<button class="plus" aria-label="Ajouter">${ic('plus')}</button>`}<span class="grow"></span>
    <div class="chg">▲ ${o.pct}<br>${o.pts}</div>
    <div class="pair"><button class="s">${o.sell}</button><button class="b">${o.buy}</button><i>${o.spread}</i></div>
    ${o.pop ? '' : `<i class="depth"></i><div class="wins">${ic('expand')}${ic('popout')}${ic('close')}</div>`}</div>
  <div class="tools"><button class="ic" aria-label="Liste">${ic('list')}</button><button class="ic" aria-label="Grille">${ic('grid')}</button>
    <select aria-label="Intervalle"><option>${o.tf}</option></select>${o.tfs.map(t => y(t, t.length > 2)).join('')}
    <select class="rng" aria-label="Plage"><option>${o.range}</option></select>${['SLS', ...o.days].map(t => y(t, t === 'SLS')).join('')}
    <button class="wd">${ic('sliders')}Modèles</button>${o.models.map(t => y(t)).join('')}
    <button class="wd">${ic('bars')}${o.side}</button><button class="wd">${ic('eye')}Lié</button><span class="grow"></span>
    <button class="set">${ic('gear')}${o.params ? 'Paramètres' : ''}</button></div>
  ${chart(o.chart)}
  ${o.favs ? favStrip() : ''}
  <div class="foot">${k('undo')}${k('ban')}${k('pencil', 1)}${k('updown', 1)}<span class="grow"></span>
    <button class="g f${o.favs ? ' on' : ''}">Favoris${ic('star')}</button><button class="g">Période</button><button class="g">Outils De Dessin</button><button class="g">Indicateurs</button><button class="g">Figures</button><span class="grow"></span>
    ${k('fit')}${k('minus')}${k('plus')}${k('cross', 1)}${k('vert', 1)}</div>`;
}

/* Chart renderer. Points are in the chart's own units: u = [originX, originY, scaleX, scaleY]. */
function chart(c) {
  const [ox, oy, sx, sy] = c.u, [vx, vy, vw, vh] = c.view;
  const X = x => +(ox + x * sx).toFixed(1), Y = y => +(oy + y * sy).toFixed(1);
  const pts = s => s.trim().split(/\s+/).map(p => p.split(',').map(Number));
  const colors = c.dark ? { u: '#5ccdf3', d: '#f37a1c', w: '#fff' } : { u: '#11b0b8', d: '#f0960f', k: '#111' };
  const pad = { 'f-white': 7, 'f-red': 7, 'f-black': 7 };
  const draw = {
    l: (k, s) => `<polyline class="${k}" fill="none" points="${pts(s).map(p => X(p[0]) + ',' + Y(p[1])).join(' ')}"/>`,
    r: (k, a, b, x, y) => `<rect class="${k}" x="${X(a)}" y="${Y(b)}" width="${X(x) - X(a)}" height="${Y(y) - Y(b)}"/>`,
    t: (k, x, y, s) => `<text class="${k}" x="${X(x)}" y="${Y(y)}">${s}</text>`,
    b: (f, a, b, x, y, s, t) => `<rect class="${f}" rx="${/white|black|tip|f-red/.test(f) ? 0 : 3}" x="${X(a)}" y="${Y(b)}" width="${X(x) - X(a)}" height="${Y(y) - Y(b)}"/><text class="${t}" x="${X(a) + (pad[f] || 2)}" y="${(Y(b) + Y(y)) / 2}">${s}</text>`,
    m: (x, y) => `<path d="M${X(x)} ${Y(y)}l6 5v7h-12v-7z" fill="#bbb" stroke="${c.dark ? 'none' : '#444'}"/>`,
    e: (k, x, y, a, b) => `<ellipse class="${k}" fill="none" cx="${X(x)}" cy="${Y(y)}" rx="${a}" ry="${b}"/>`,
    a: (k, a, b, x, y) => {
      const L = Math.hypot(X(x) - X(a), Y(y) - Y(b)), g = Math.atan2(Y(y) - Y(b), X(x) - X(a)) * 180 / Math.PI;
      return `<path class="arrow ${k}" transform="translate(${X(a)} ${Y(b)}) rotate(${g.toFixed(1)})" d="M0-4H${L - 11}V-9L${L} 0L${L - 11} 9V4H0z"/>`;
    },
    c: (w, s) => s.trim().split(/\s*;\s*/).filter(Boolean).map(q => {
      const [x, h, t, b, l] = q.slice(1).split(' ').map(Number), f = colors[q[0]];
      return `<path d="M${X(x)} ${Y(h)}V${Y(l)}" stroke="${f}"/><rect x="${(X(x) - w / 2).toFixed(1)}" y="${Y(t)}" width="${w}" height="${Math.max(1.5, Y(b) - Y(t)).toFixed(1)}" fill="${f}"/>`;
    }).join(''),
    n: (amp, s) => {
      const p = pts(s), d = { u: '', d: '', k: '' };
      let seed = 7, i = 0, prev = p[0][1];
      const rnd = () => (seed = (seed * 16807) % 2147483647) / 2147483647;
      for (let x = p[0][0]; x <= p[p.length - 1][0]; x += 2.2) {
        while (i < p.length - 2 && x > p[i + 1][0]) i++;
        const [a, b] = [p[i], p[i + 1]], y = a[1] + (b[1] - a[1]) * (x - a[0]) / (b[0] - a[0]) + (rnd() - .5) * amp;
        const k = rnd() < .03 ? 'k' : (y < prev) === (rnd() < .8) ? 'u' : 'd', e = rnd() * amp * .6;
        d[k] += `M${X(x)} ${Y(Math.min(y, prev) - e)}V${Y(Math.max(y, prev) + e * .6)}`;
        prev = y;
      }
      return Object.keys(d).map(k => `<path d="${d[k]}" stroke="${colors[k]}" stroke-width="1.3"/>`).join('');
    }
  };
  const ax = X(c.axis), g = 'g' + vx + vy;
  const times = c.times.map(([x, s]) => draw.t('mid-t', x, c.ty, s)).join('');
  const ticks = c.ticks.map(([y, s]) => draw.t('', c.tx, y, s)).join('');
  const [row, plotL, axisBg, rule] = c.dark ? ['#121212', '#000', '#121212', '#686868'] : [c.row, `url(#${g})`, c.row, '#d8d8d8'];
  return `<svg class="chart" viewBox="${c.view.join(' ')}">
    <defs><linearGradient id="${g}" x2="0" y2="1"><stop stop-color="#e9e9e9"/><stop offset="1" stop-color="#fff"/></linearGradient><clipPath id="c${g}"><rect x="${vx}" y="${vy + 16}" width="${ax - vx}" height="${vh - 16}"/></clipPath></defs>
    <rect x="${vx}" y="${vy}" width="${vw}" height="${vh}" fill="${row}"/>
    <rect x="${vx}" y="${vy + 15}" width="${ax - vx}" height="${vh - 15}" fill="${plotL}"/>
    <path d="M${vx} ${vy + 14}H${c.dark ? vx + vw : vx + vw}" stroke="${rule}" stroke-width="2"/><path d="M${ax} ${vy + 14}V${vy + vh}" stroke="${rule}" stroke-width="${c.dark ? 1.5 : 2}"/>
    <g clip-path="url(#c${g})">${c.plot.map(([f, ...a]) => draw[f](...a)).join('')}</g>
    ${times}${ticks}${c.over.map(([f, ...a]) => draw[f](...a)).join('')}</svg>`;
}

const hours = (xs, labels) => xs.map((x, i) => [x, labels[i]]);
const lbl = s => s.split(' ').map(v => v.replace('_', ' '));

panel('spx', { name: 'US SPX 500', pct: '0,19 %', pts: '7,45', sell: '3 829,00', buy: '3 829,60', spread: '6,0', tf: '15 minutes', tfs: ['15m', '30m', '4h'], range: '13 heures', days: ['3J', '1S'], models: [1, 7], side: 'Vente',
  chart: { dark: 1, view: [0, 106, 956, 446], u: [0, 0, .6122, .3699], axis: 1441, tx: 1452, ty: 304,
    times: hours([170, 262, 357, 455, 554, 652, 944, 1042, 1140, 1238, 1335, 1433], lbl('23_déc. 01:00 02:00 03:00 04:00 05:00 08:00 09:00 10:00 11:00 12:00 13:00')),
    ticks: [[343, '3 840,00'], [494, '3 836,00'], [645, '3 832,00'], [797, '3 828,00'], [948, '3 824,00'], [1099, '3 820,00'], [1253, '3 816,00'], [1405, '3 812,00']],
    plot: [['c', 11, 'u12 946 968 1492 1492;d37 714 916 1152 1198;d61 1041 1160 1190 1198;u86 1060 1087 1179 1179;u110 1041 1044 1068 1144;d135 968 976 995 1089;d159 968 1003 1071 1144;u184 1017 1033 1073 1100;u208 968 1014 1041 1081;d233 968 1022 1068 1106;d256 1060 1060 1162 1171;d280 1089 1152 1200 1238;d305 1203 1208 1360 1379;u329 1276 1276 1349 1419;u354 1044 1087 1281 1298;u378 984 984 1079 1089;u403 808 833 973 973;d427 779 843 916 935;u452 722 765 906 927;u476 711 725 757 798;d501 711 727 898 906;u525 798 868 887 900;u550 722 765 865 889;u574 722 727 757 811;u599 624 668 722 722;d623 660 660 687 706;d648 679 679 743 743;u672 733 733 738 773;d697 725 725 835 854;u721 754 843 846 876;u744 716 725 835 849;d768 727 733 746 865;d793 746 752 873 884;d817 860 865 911 930;d842 887 903 987 1025;u866 833 835 976 989;d891 770 827 835 835;u915 743 816 825 892;d940 789 825 900 957;u964 808 871 895 911;d989 825 865 898 908;d1013 738 889 946 1049;u1038 898 943 946 1119;d1062 843 952 955 1092;u1087 862 871 954 1006;d1111 825 871 1052 1052;d1136 1025 1054 1095 1144;u1160 976 1027 1095 1119;u1185 876 927 1033 1033;u1209 865 906 916 984;u1232 741 762 906 908'],
      ['l', 's-blue w2 dot', '0,711 1441,711'], ['l', 's-red', '0,761 1441,761'], ['t', 't-blue', 7, 686, '(70,50 %)']],
    over: [['b', 'f-tip', 693, 287, 893, 322, '23 déc. 2022 14:30:00', 't-black small'], ['m', 1257, 326], ['b', 'f-blue', 1443, 688, 1524, 727, '3 830,31', 't-navy'], ['b', 'f-dred', 1441, 727, 1561, 787, '3 829,00', 'big'], ['b', 'f-white', 1441, 1444, 1561, 1492, '3 810,16', 't-black']] } });

panel('ndaq', { name: 'US NDAQ 100', pct: '0,15 %', pts: '16,91', sell: '10 968,21', buy: '10 970,21', spread: '2,00', tf: '15 minutes', tfs: ['15m', '30m', '4h'], range: '17 heures', days: ['3J', '1S'], models: [1, 7], side: 'Vente',
  chart: { dark: 1, view: [964, 106, 956, 446], u: [960, 0, .6122, .3699], axis: 1447, tx: 1460, ty: 304,
    times: hours([237, 322, 413, 505, 596, 688, 779, 871, 962, 1054, 1145, 1236, 1328, 1420], lbl('23_déc. 01:00 02:00 03:00 04:00 05:00 06:00 07:00 08:00 09:00 10:00 11:00 12:00 13:00')),
    ticks: [[362, '11 000,00'], [626, '10 980,00'], [892, '10 960,00'], [1159, '10 940,00'], [1424, '10 920,00']],
    plot: [['c', 9, 'u19 1446 1492 1492 1492;u41 981 1060 1492 1492;d64 965 1052 1492 1492;u87 806 876 1492 1492;d110 554 816 1168 1233;d133 1022 1167 1170 1187;u156 1027 1030 1160 1171;u179 1006 1008 1035 1117;d201 779 781 833 957;d224 781 833 971 1041;u247 906 962 971 1003;u270 892 952 971 1017;d293 889 965 1033 1081;d316 1022 1035 1168 1168;u339 1062 1165 1168 1214;d361 1162 1171 1403 1427;u384 1268 1271 1398 1454;u407 1025 1089 1271 1295;u430 933 938 1084 1095;u453 757 822 935 935;d476 752 825 916 935;u499 641 706 914 949;u522 627 665 703 741;d544 646 665 876 879;u567 760 854 873 889;u590 681 738 854 873;u613 673 697 743 792;u636 562 627 687 687;d659 606 627 638 662;d682 627 635 725 730;u705 703 706 719 757;d727 695 706 825 852;u750 749 819 822 860;u773 684 692 819 825;d796 697 697 754 873;d819 749 752 892 922;d842 876 889 919 949;d865 865 919 968 1035;u888 787 795 968 968;u911 708 787 790 800;d933 665 786 792 846;d956 757 795 916 992;u979 765 854 911 935;d1002 814 857 911 919;d1025 687 889 1000 1114;d1048 946 1003 1008 1222;d1070 935 1014 1052 1190;u1093 900 938 1057 1125;d1116 841 938 1106 1106;d1139 1095 1106 1200 1246;u1162 1046 1165 1203 1227;u1185 989 1019 1162 1173;u1208 965 1005 1008 1095;u1231 776 786 1008 1008'],
      ['l', 's-red', '0,786 1447,786'], ['l', 's-red dot', '140,1010 1447,1010'], ['l', 's-brown w2', '0,1192 1447,1192'], ['l', 's-blue dot', '0,1297 1447,1297'], ['t', 't-red', 8, 1013, '16,91 / 0,15 %'], ['t', 't-brown', 12, 1167, '(100,00 %)'], ['t', 't-blue', 12, 1273, '(79,00 %)']],
    over: [['b', 'f-tip', 7, 287, 207, 322, '23 déc. 2022 15:00:00', 't-black small'], ['m', 1254, 326], ['b', 'f-white', 1448, 541, 1568, 589, '10 984,22', 't-black'], ['b', 'f-green', 1448, 752, 1568, 811, '10 968,21', 'big'], ['b', 'f-red', 1448, 984, 1568, 1030, '10 951,30', 'bold'], ['b', 'f-brown', 1450, 1170, 1542, 1208, '10 937,42', ''], ['b', 'f-blue', 1450, 1273, 1542, 1314, '10 929,57', 't-navy']] } });

panel('us30', { name: 'US 30', pct: '0,31 %', pts: '103,66', sell: '33 121,26', buy: '33 124,26', spread: '3,00', tf: '15 minutes', tfs: ['15m', '30m', '4h'], range: '19 heures', days: ['3J', '1S'], models: [1, 7], side: 'Vente',
  chart: { dark: 1, view: [0, 637, 956, 419], u: [0, 570, 1.2245, .3333], axis: 720, tx: 726, ty: 220,
    times: hours([61, 103, 149, 187, 229, 271, 312, 354, 396, 438, 480, 521, 563, 604], lbl('21:00 22:00 23_déc. 01:00 02:00 03:00 04:00 05:00 06:00 07:00 08:00 09:00 10:00 11:00')),
    ticks: [[613, '33 090,00'], [821, '33 060,00'], [1028, '33 030,00'], [1231, '33 000,00']],
    plot: [['c', 9, 'u57 1235 1275 1460 1460;d68 1155 1272 1460 1460;u78 1008 1035 1460 1460;d89 657 978 1251 1310;d99 1110 1227 1269 1296;u110 1165 1215 1278 1302;u121 1112 1116 1206 1265;d131 1118 1119 1122 1122;d141 1077 1125 1209 1293;u152 1098 1110 1212 1233;u162 1003 1053 1107 1200;d172 966 1056 1134 1175;d183 1122 1136 1275 1275;d193 1190 1269 1317 1358;d203 1308 1323 1449 1455;u214 1335 1344 1440 1455;u225 1092 1092 1347 1347;u235 969 981 1089 1113;u245 774 792 978 978;d256 798 798 897 897;u266 669 735 894 900;u277 675 681 738 780;d287 678 678 885 885;u298 758 834 882 888;u308 642 699 831 846;u319 651 666 705 750;u329 516 549 663 663;d339 531 546 567 606;d350 558 558 675 675;u360 663 666 672 717;d371 645 660 783 804;u381 786 786 789 789;u391 600 609 783 783;d402 609 612 639 783;d412 633 633 798 813;d423 768 789 825 864;d433 795 819 963 1002;u444 753 753 960 966;u454 678 753 756 774;u464 744 744 759 759;d475 711 750 837 912;u485 765 795 840 867;d496 714 786 828 828;d506 627 813 849 1002;u517 699 789 849 1047;u527 630 744 786 969;u537 540 552 744 831;d548 516 564 825 825;d559 825 825 906 906;u569 741 810 903 930;u579 591 639 804 807;u590 615 615 627 627;u600 393 402 615 615'],
      ['l', 's-red', '0,400 720,400'], ['l', 's-red dot', '72,1117 720,1117'], ['l', 's-brown dot', '0,1359 720,1359'], ['t', 't-red', 1, 1120, '104,16 / 0,32 %'], ['t', 't-brown', 2, 1331, '(79,00 %)']],
    over: [['b', 'f-tip', 620, 201, 720, 240, '23 déc. 2022 15:30:00', 't-black small'], ['m', 612, 246], ['b', 'f-green', 720, 363, 781, 430, '33 121,26', 'big'], ['b', 'f-white', 720, 504, 781, 558, '33 101,01', 't-black'], ['b', 'f-red', 720, 1089, 781, 1140, '33 017,10', 'bold'], ['b', 'f-brown', 722, 1332, 768, 1377, '32 982,05', '']] } });

panel('dax', { name: 'Allemagne 40', pct: '0,3 %', pts: '42,55', sell: '13 975,34', buy: '13 976,34', spread: '1,00', tf: '15 minutes', tfs: ['15m', '30m', '4h'], range: '21 heures', days: ['3J', '1S'], models: [1, 7], side: 'Vente',
  chart: { dark: 1, view: [964, 637, 956, 419], u: [0, 570, 1.2245, .3333], axis: 1508, tx: 1514, ty: 220,
    times: hours([863, 900, 937, 974, 1015, 1050, 1077, 1115, 1153, 1190, 1228, 1265, 1302, 1340, 1377], lbl('19:00 20:00 21:00 22:00 23_déc. 01:15 02:00 03:00 04:00 05:00 06:00 07:00 08:00 09:00 10:00')),
    ticks: [[417, '14 010,00'], [633, '13 980,00'], [856, '13 950,00'], [1079, '13 920,00'], [1299, '13 890,00']],
    plot: [['c', 7, 'd792 1131 1239 1290 1323;u801 1218 1221 1296 1302;d810 1190 1215 1266 1293;d820 1224 1263 1437 1455;d829 1443 1443 1460 1460;u838 1410 1449 1460 1460;d848 1443 1443 1460 1460;u885 1353 1358 1460 1460;u895 1293 1310 1365 1455;d904 1269 1311 1326 1374;u913 1158 1170 1331 1331;w923 1088 1167 1170 1239;u932 963 984 1170 1170;d942 978 978 1089 1089;u951 897 903 1086 1086;d960 870 870 1086 1092;d970 1062 1089 1113 1119;u979 1008 1038 1107 1110;u988 1006 1008 1026 1053;d997 948 960 966 1020;d1007 948 972 1020 1050;u1016 982 990 1020 1041;u1026 945 978 1000 1029;d1035 996 1014 1080 1086;u1044 1074 1074 1077 1077;d1054 1074 1077 1170 1194;u1063 1107 1110 1164 1200;u1073 960 963 1113 1119;u1081 879 882 957 978;u1091 768 783 876 876;d1100 741 789 837 852;u1110 711 744 840 840;u1119 708 714 741 768;d1129 708 708 807 807;u1138 768 774 801 801;u1147 666 684 771 777;u1157 645 651 678 726;u1165 561 627 648 648;w1175 615 624 627 666;d1184 618 618 657 657;d1194 657 660 684 711;d1203 681 681 765 765;d1213 729 762 780 786;u1222 696 696 777 777;d1231 699 699 729 729;d1241 735 735 798 798;d1250 762 786 798 819;d1259 780 798 810 837;u1269 750 765 801 813;u1278 705 747 752 768;d1287 681 735 822 858;d1297 777 819 882 918;u1306 810 867 885 918;d1315 864 864 870 870;d1325 870 870 1077 1077;u1334 942 987 1080 1236;u1344 918 984 996 1116;u1353 912 951 984 1062;d1362 900 957 1020 1053;u1371 993 1014 1026 1134;u1382 906 996 1014 1083;u1391 774 783 996 1002;d1400 705 771 783 816;u1409 651 672 786 786'],
      ['l', 's-brown dot', '787,604 1508,604'], ['l', 's-red', '787,674 1508,674'], ['l', 's-red dot', '852,1010 1508,1010'], ['l', 's-brown dot', '787,1219 1508,1219'], ['t', 't-brown', 790, 575, '(70,50 %)'], ['t', 't-red', 788, 1012, '45,80 / 0,33 %'], ['t', 't-brown', 790, 1190, '(79,00 %)']],
    over: [['b', 'f-tip', 1407, 201, 1508, 240, '23 déc. 2022 15:30:00', 't-black small'], ['m', 1419, 246], ['b', 'f-brown', 1509, 588, 1555, 622, '13 984,76', ''], ['b', 'f-white', 1508, 544, 1568, 597, '13 988,30', 't-black'], ['b', 'f-dred', 1508, 636, 1568, 702, '13 975,34', 'big'], ['b', 'f-red', 1508, 982, 1568, 1032, '13 929,54', 'bold'], ['b', 'f-brown', 1509, 1191, 1555, 1237, '13 901,28', '']] } });

const lines = (x, y, step, arr) => arr.map((s, i) => ['t', 'small it', x, y + step * i, s]).filter(a => a[4]);

panel('dax2m', { name: 'Allemagne 40', pct: '0,3 %', pts: '42,55', sell: '13 975,34', buy: '13 976,34', spread: '1,00', tf: '2 minutes', tfs: ['1m', '2m', '5m'], range: '3 Jours', days: ['1J', '1S'], models: [1, 5, 6], side: 'Achat', params: 1, favs: 1,
  chart: { row: '#efefef', view: [2, 1186, 1585, 736], u: [0, 1080, .6122, .3444], axis: 2472, tx: 2484, ty: 330,
    times: hours([113, 196, 279, 363, 447, 531, 615, 699, 790, 856, 939, 1013, 1093, 1177, 1261, 1345, 1428, 1513, 1596, 1679, 1764, 1838, 1921, 1998, 2081, 2164, 2250, 2333, 2416], lbl('07:00 09:00 11:00 13:00 15:00 17:00 19:00 21:00 22_déc. 02:00 04:00 06:00 08:00 10:00 12:00 14:00 16:00 18:00 20:00 22:00 01:14 03:00 05:00 07:00 09:00 11:00 13:00 15:00 17:00')),
    ticks: [[577, '14 200,00'], [1054, '14 100,00'], [1526, '14 000,00'], [2001, '13 900,00']],
    plot: [
      ['n', 55, '5,1590 8,1655 20,1665 45,1665 55,1590 75,1560 90,1620 110,1560 122,1600 128,1680 140,1640 150,1680 165,1730 174,1920 182,1840 188,1730 195,1760 200,1640 210,1600 222,1540 235,1630 250,1580 265,1520 275,1600 285,1650 300,1630 315,1620 332,1520 345,1600 358,1540 372,1480 385,1480 395,1430 405,1440 416,1390 425,1430 437,1480 450,1350 460,1420 475,1310 485,1130 495,1120 510,1080 515,1130 527,1060 535,1120 545,1110 555,1160 570,1110 590,1090 600,1150 612,1120 625,1130 638,1060 650,1130 660,1150 670,1120 680,1150 695,1160 703,1260 715,1190 727,1095'],
      ['n', 22, '727,1090 738,1120 752,1085 762,1150 775,1165 790,1155 805,1175 810,1230 820,1140 828,1130 836,1090 837,890 845,960 852,1000 870,960 885,905 900,920 915,950 930,980 945,950 960,900 975,910 1000,905 1030,895 1045,940 1060,950 1068,1040'],
      ['n', 45, '1068,1040 1085,980 1095,970 1104,1060 1110,950 1115,830 1120,780 1130,880 1137,800 1145,890 1155,840 1165,930 1175,950 1185,1040 1195,1140 1202,1220 1210,1130 1222,1080 1232,1130 1245,1220 1250,1230 1258,1160 1275,1170 1280,1220 1288,1340 1300,1310 1310,1320 1325,1250 1335,1300 1345,1400 1352,1520 1362,1480 1378,1560 1380,1640 1388,1860 1396,1850 1402,2000 1412,1900 1420,1950 1430,2010 1440,1970 1450,2020 1460,1990 1467,1950 1475,2030 1485,1990 1497,2010 1502,2120 1512,2170 1524,2120 1530,2210 1537,2200 1548,2250 1555,2160 1562,2180 1573,2150 1578,2190 1580,2130 1590,2030 1600,2060 1610,1960 1622,1930 1635,1840 1645,1760 1650,1680 1660,1770 1675,1850 1690,1820 1702,1800 1715,1840 1730,1810 1745,1860 1760,1930 1770,1950 1780,1900 1790,1820 1800,1720 1812,1700 1825,1670 1840,1680 1855,1690 1865,1640 1875,1610 1882,1570 1890,1600 1905,1590 1920,1650 1935,1690 1950,1660 1970,1720 1985,1720 2005,1680 2020,1720 2030,1780 2045,1750 2055,1690 2060,1890 2068,1970 2075,1860 2085,1900 2098,1810 2108,1880 2120,1860 2128,1720 2140,1690 2150,1625'],
      ['r', 'zone z-blue', -5, 439, 1922, 550], ['r', 'zone z-blue', -5, 614, 1917, 759], ['r', 'zone z-or', 827, 1070, 1680, 1084], ['r', 'zone z-blue', 827, 1081, 1680, 1133], ['r', 'zone z-blue', 809, 1212, 1680, 1232], ['r', 'zone z-blue', 702, 1238, 1684, 1284],
      ['r', 'zone z-green', 830, 988, 1061, 1011], ['r', 'zone z-red', 818, 884, 1089, 895], ['r', 'zone z-blue', 1880, 1557, 2149, 1595], ['r', 'zone z-or', 1880, 1598, 2160, 1648], ['r', 'zone z-or', 2068, 1941, 2135, 1964], ['r', 'zone z-blue', 2068, 1964, 2134, 2003], ['r', 'zone z-deep', 1419, 2022, 1482, 2047], ['r', 'zone z-deep', 1401, 2258, 1545, 2277], ['r', 'zone z-grey', 1524, 2168, 1568, 2252],
      ['l', 's-red', '0,1641 2472,1641'], ['l', 's-yel', '2109,1448 2149,1448'], ['l', 's-lime', '1872,1657 1926,1657'], ['l', 's-yel', '1945,1646 2190,1646'], ['l', 's-yel', '2018,1703 2050,1703'], ['l', 's-yel', '2018,1786 2118,1786'], ['l', 's-yel', '1753,1963 1795,1963'], ['l', 's-yel', '1935,1979 2078,1979'], ['l', 's-yel', '2050,1852 2068,1852'],
      ['l', 's-or w2', '1914,1685 2048,1802'], ['l', 's-or w2', '1876,1688 1948,1960'], ['l', 's-or w2 dash', '1808,1742 1862,1700'], ['l', 's-or w2 dash', '2105,1935 2152,1838'], ['l', 's-or', '2118,1900 2150,1640'],
      ['l', 's-red w2', '1936,1692 1948,1650 1969,1735 2005,1672 2031,1798 2054,1728'], ['l', 's-red w2', '1553,2152 1562,2195 1567,2110 1572,2185 1577,2075 1582,2175'], ['e', 's-red w2', 1548, 2266, 3, 9], ['e', 's-grey', 1391, 1878, 5, 22],
      ['t', 't-red mid-t', 1948, 1625, '1'], ['t', 't-red mid-t', 1966, 1760, '2'], ['t', 't-red mid-t', 2005, 1650, '3'], ['t', 't-red mid-t', 2029, 1820, '4'], ['t', 't-red mid-t', 2053, 1706, '5'], ['t', 't-red mid-t', 1565, 2093, '2'], ['t', 't-red mid-t', 1563, 2218, '1'], ['t', 't-red mid-t', 1575, 2055, '4'], ['t', 't-red mid-t', 1579, 2197, '5'],
      ['r', 'note fade', 968, 455, 1088, 908], ...lines(971, 472, 37.7, ['SUPPLY ZONE', '', 'DISTRIBUTION', 'PSY', 'BC', 'AR', 'ST', 'UT', 'UTAD', 'BOS', 'LPSY', 'CREEK']), ['l', 'arrow deep', '1089,457 1100,474 1089,491'],
      ['r', 'note', 1680, 1837, 1860, 1925], ['t', 'it', 1683, 1860, 'Asie + la nuit'], ['t', 'it', 1683, 1902, 'asie -  de 8h à 9h15'],
      ['r', 'note', 1914, 1997, 2050, 2415], ...lines(1917, 2016, 37.9, ['DEMAND ZONE', '', 'ACCUMULATION', 'PS', 'SC', 'AR', 'ST', 'ST-B', 'SPRING', 'BOS', 'Test']),
      ['a', '', 495, 928, 517, 1008], ['a', '', 819, 795, 835, 877], ['a', 'deep', 1089, 675, 1116, 745], ['a', '', 1295, 558, 1309, 642], ['a', '', 1895, 1822, 1920, 1900], ['a', 'fade', 1801, 1912, 1813, 1832], ['r', 'arrow', 1860, 1848, 1867, 1874], ['r', 'arrow', 2050, 2004, 2057, 2030]],
    over: [['m', 2152, 350], ['b', 'f-dred', 2472, 1606, 2591, 1669, '13 976,34', 'big t-white']] } });

const yel = (y, a, b) => ['l', 's-yel', `${a},${y} ${b},${y}`];
const brown = 'b f-brown'.split(' ');
panel('daxf', { name: 'Allemagne 40 - Mar 2023', pop: 1, pct: '0,3 %', pts: '43,25', sell: '14 038,5', buy: '14 040,5', spread: '-', tf: '5 minutes', tfs: ['1m', '2m', '5m'], range: '8 Jours', days: ['1J', '1S'], models: [1, 5, 6], side: 'Achat', params: 1,
  chart: { row: '#efeeef', view: [1921, 107, 1917, 904], u: [1920, 0, .6122, .6888], axis: 3016, tx: 3029, ty: 166,
    times: hours([944, 1424, 1905, 2385, 2886], lbl('20_déc. 21_déc. 22_déc. 23_déc. 24_déc.')),
    ticks: [[236, '14 300,00'], [432, '14 200,00'], [627, '14 100,00'], [1019, '13 900,00'], [1213, '13 800,00'], [1408, '13 700,00']],
    plot: [['r', 'zone z-grey', -5, 633, 1538, 1023], ['r', 'zone z-deep', 814, 1143, 3030, 1255], ['r', 'zone z-or', 1046, 1104, 3030, 1143],
      ['n', 34, '2,672 15,655 30,630 42,592 55,612 75,640 95,680 103,685 112,655 125,665 134,620 145,670 157,655 165,780 175,890 185,920 195,850 205,900 212,960 220,1020 232,910 240,880 245,770 256,770 266,840 275,900 285,905 290,880 299,800 305,930 316,1000 325,870 333,850 345,950 355,940 365,945 378,940 388,915 400,915 410,850 430,830'],
      ['n', 14, '430,830 445,810 460,825 476,775 490,800 505,810 530,800 548,800 563,845 580,805 612,820 615,780'],
      ['n', 34, '615,780 620,700 630,760 640,735 652,800 664,700 680,740 693,800 708,740 722,800 740,750 755,740 768,740 780,800 800,805 830,790 840,850 855,890'],
      ['n', 18, '855,890 868,920 885,890 900,900 915,860 940,835 955,785 965,815 988,820 992,1050 1000,1045 1010,1170 1020,1145 1035,1145 1042,1265 1050,1220 1065,1180 1068,1100'],
      ['n', 36, '1068,1100 1075,1010 1085,1060 1090,990 1098,1080 1105,1090 1113,900 1130,860 1138,900 1145,860 1155,900 1165,870 1175,900 1186,840 1195,890 1210,870 1225,940 1237,970 1250,900 1262,870 1275,930 1290,880 1310,850 1330,800 1350,840 1370,850'],
      ['n', 18, '1370,845 1385,820 1400,755 1415,790 1425,770 1432,690 1450,710 1470,730 1490,715 1505,745 1525,700 1545,710 1560,760'],
      ['n', 28, '1560,760 1568,760 1580,840 1593,730 1604,705 1616,730 1626,700 1643,740 1655,680 1666,730 1678,670 1694,650 1708,665 1723,640 1733,530 1748,505 1758,530 1773,530 1786,515 1798,535 1811,500 1828,540 1846,565 1858,515 1868,515 1883,540 1898,560 1910,520 1913,440'],
      ['n', 11, '1913,440 1923,465 1938,435 1960,462 1978,435 1993,438 2013,430 2030,450'],
      ['n', 28, '2030,450 2038,490 2053,480 2061,395 2068,430 2083,430 2098,510 2104,565 2113,515 2126,570 2138,545 2150,620 2165,590 2173,620 2180,690 2192,705 2196,820 2208,885 2223,885 2236,890 2248,890 2258,960 2268,950 2276,990 2286,965 2296,930 2303,900 2313,860 2325,850 2329,760 2333,830 2353,820 2368,820 2388,865 2403,800 2410,760'],
      ['n', 18, '2410,760 2428,760 2448,720 2463,745 2478,765 2493,765 2513,760'], ['n', 32, '2513,765 2523,800 2535,770 2543,870 2558,810 2563,850 2573,770 2585,750'],
      yel(264, 0, 2403), yel(379, 1901, 2310), yel(631, 1864, 2325), yel(726, 691, 1360), yel(786, 950, 1302), yel(828, 1176, 1218), yel(690, 1384, 1510), yel(852, 1538, 1658), yel(954, 1089, 1145), yel(990, 1225, 1262), yel(1034, 100, 395), yel(1102, 1097, 1135), yel(1289, 1062, 1315), yel(896, 2117, 2255), yel(996, 1648, 2363), yel(1034, 2154, 2425),
      ['l', 's-or w2', '612,680 1273,893'], ['l', 's-or w2', '1066,882 2066,340'], ['l', 's-or w2', '1113,1103 2113,560'], ['l', 's-or w2 dash', '2068,350 2335,985'], ['l', 's-or w2', '2196,815 2280,932'],
      ['l', 's-brown w2', '1769,338 3016,338'], ['l', 's-brown w2 dot', '1769,673 3016,673'], ['l', 's-brown w2 dot', '1769,753 3016,753'], ['l', 's-brown w2 dot', '1769,811 3016,811'], ['l', 's-brown w2 dot', '1769,868 3016,868'], ['l', 's-brown w2', '1769,1009 3016,1009'],
      ['l', 's-red', '0,744 3016,744'], ['l', 's-red dot', '120,822 3016,822'], ['l', 's-red w2', '993,1283 1473,688 1558,852 1752,494 1838,591 2038,378'],
      ['t', 't-brown', 1774, 325, '(0,00 %)'], ['t', 't-brown', 1774, 660, '(50,00 %)'], ['t', 't-brown', 1774, 740, '(61,80 %)'], ['t', 't-brown', 1774, 798, '(70,50 %)'], ['t', 't-brown', 1774, 854, '(79,00 %)'], ['t', 't-brown', 1774, 996, '(100,00 %)'],
      ['t', 't-red mid-t', 1473, 678, '1'], ['t', 't-red mid-t', 1556, 864, '2'], ['t', 't-red mid-t', 1752, 483, '3'], ['t', 't-red mid-t', 1836, 582, '4'], ['t', 't-red mid-t', 2036, 369, '5'], ['t', 't-red', 3, 824, '40,0 / 0,29 %'],
      ['r', 'note', 2223, 713, 2355, 735], ['t', 'it', 2226, 724, 'Dax40  - Mars'], ['l', 'arrow', '2353,713 2366,724 2353,736']],
    over: [['m', 2586, 177], [...brown, 3017, 327, 3098, 348, '14 247,7', 't-white bold'], [...brown, 3017, 662, 3098, 683, '14 076,4', 't-white bold'], [...brown, 3017, 740, 3098, 762, '', ''], [...brown, 3017, 798, 3098, 820, '14 006,2', 't-white bold'], [...brown, 3017, 857, 3098, 877, '13 977,1', 't-white bold'], [...brown, 3017, 997, 3098, 1018, '13 905,2', 't-white bold'],
      ['b', 'f-dred', 3017, 726, 3135, 758, '14 040,5', 'big t-white'], ['b', 'f-red', 3017, 808, 3135, 833, '14 000,5', 'bold t-white'], ['b', 'f-black', 3017, 1408, 3135, 1433, '13 693,0', 'bold t-white']] } });

const gEnd = 3012;
panel('dax5h', { name: 'Allemagne 40', n: 4, pop: 1, pct: '0,3 %', pts: '42,55', sell: '13 975,34', buy: '13 976,34', spread: '-', tf: '2 minutes', tfs: ['1m', '2m', '5m'], range: '5 heures', days: ['1J', '1S'], models: [1, 5, 6], side: 'Achat', params: 1,
  chart: { row: '#fafafa', view: [1921, 1135, 1917, 1006], u: [1920, 1080, .6122, .69], axis: 3016, tx: 3029, ty: 91,
    times: hours([96, 483, 885, 1316, 1746, 2177, 2608], lbl('05:00 06:00 07:00 08:00 09:00 10:00 11:00')),
    ticks: [[357, '13 980,00'], [621, '13 960,00'], [885, '13 940,00'], [1149, '13 920,00'], [1412, '13 900,00']],
    plot: [['l', 's-grey w2', `1717,397 ${gEnd},397`], ['l', 's-grey w2', `1717,972 ${gEnd},972`], ['l', 's-grey w2', `1717,1189 ${gEnd},1189`], ['l', 's-vio w2', `1717,614 ${gEnd},614`],
      ['c', 5, 'd9 272 284 312 312;u24 281 297 303 319;u38 246 252 291 291;d53 245 245 284 284;d68 278 278 317 317;k82 332 337 339 339;u96 317 317 343 352;u110 259 271 304 304;d125 278 278 284 297;d138 258 258 271 277;k153 272 277 279 279;d167 271 271 284 284;k182 280 291 293 312;d197 284 284 317 317;d210 304 304 317 317;d225 297 297 310 310;d239 317 317 337 337;d254 343 343 363 377;d269 377 377 390 390;d282 345 383 390 390;d297 383 383 390 390;k312 383 383 384 384;k326 390 390 391 391;d340 372 377 390 390;d354 384 384 395 395;d368 390 390 455 455;d383 448 448 460 460;d398 468 468 507 507;u411 507 507 514 535;d425 483 500 507 507;d440 514 514 532 532;k455 516 527 528 560;k469 522 533 534 554;k483 527 527 528 535;d497 526 533 553 560;u512 470 482 559 559;u527 462 481 487 515;d542 484 487 571 571;u554 546 558 560 573;u569 520 520 546 556;d584 506 507 520 520;u599 481 481 507 507;u613 468 468 487 496;u626 474 474 481 481;u641 409 409 455 455;d656 404 416 421 421;d670 429 429 494 506;d685 468 468 533 538;u698 481 494 526 526;k713 510 520 521 527;u728 481 481 526 547;d742 469 474 481 481;u755 475 483 494 510;d770 488 488 526 532;d785 524 533 599 611;u799 579 588 593 593;d814 596 606 625 625;u827 546 559 612 612;d842 536 559 591 612;d857 546 572 599 599;u871 592 592 605 633;u886 563 572 578 627;d900 555 559 590 590;d928 578 578 591 591;u943 592 592 612 612;k958 592 592 593 612;u971 533 533 572 572;d986 526 526 546 546;d1000 540 540 566 578;d1015 561 572 585 585;d1028 592 599 612 663;d1043 604 604 645 645;u1058 612 612 651 664;u1072 559 559 599 599;u1087 565 565 572 613;u1100 526 526 559 573;d1115 520 520 546 546;d1130 539 539 546 552;u1144 507 550 553 562;k1159 527 546 548 567;k1173 506 507 508 535;d1188 500 500 533 533;u1201 493 493 507 513;u1216 449 480 487 487;u1231 475 475 487 487;u1244 454 454 474 488;d1258 423 461 474 480;d1273 468 480 500 500;d1288 475 506 662 662;u1303 578 604 655 710;d1316 500 610 623 637;d1330 578 636 670 670;d1345 644 683 688 710;d1360 677 696 710 727;u1373 585 642 709 709;u1388 600 616 648 671;d1402 579 623 636 640;d1417 637 642 670 714;d1432 665 675 696 701;d1445 684 701 761 768;d1459 754 754 826 832;u1474 754 774 832 832;u1489 723 766 767 767;u1503 736 767 774 774;d1517 729 774 800 819;u1531 754 754 806 835;u1546 690 709 752 755;u1562 683 683 701 729;u1575 638 675 681 684;d1588 655 668 722 722;u1603 714 722 727 755;u1618 668 700 727 727;u1632 651 688 694 703;u1645 651 662 682 682;u1660 565 603 667 667;d1675 572 610 662 675;u1690 546 556 649 677;d1704 552 577 754 761;u1717 636 638 761 932;u1732 493 604 635 668;d1747 599 610 754 795;d1761 754 754 1023 1062;d1776 1004 1029 1167 1204;u1789 1013 1120 1154 1167;u1804 1001 1110 1120 1152;d1819 1087 1110 1198 1342;u1833 1091 1197 1198 1269;d1848 1140 1184 1190 1277;u1861 1071 1101 1240 1240;d1876 1000 1088 1303 1317;u1890 1161 1193 1303 1407;u1905 1010 1029 1180 1188;u1918 893 971 1022 1026;d1933 980 984 1000 1148;d1948 1002 1007 1083 1198;u1962 998 1038 1083 1183;u1977 919 984 1056 1060;u1990 887 904 977 984;u2005 909 910 912 1035;d2020 841 914 991 998;d2034 935 991 1049 1075;u2049 954 1036 1056 1072;u2062 907 909 1038 1084;d2077 898 909 1059 1098;u2091 975 1030 1067 1077;u2106 965 978 1038 1058;u2121 838 914 991 1003;k2135 884 909 910 1014;u2149 846 912 914 967;u2163 896 903 917 996;d2178 896 896 929 987;u2193 812 838 922 930;u2206 812 819 871 904;d2220 825 825 924 924;d2235 858 919 975 975;d2250 969 975 1098 1110;d2263 1054 1093 1117 1229;u2278 1010 1023 1117 1132;d2292 994 1022 1126 1152;u2307 1030 1035 1132 1159;d2322 978 1035 1071 1090;u2335 979 1032 1077 1116;u2350 1016 1020 1026 1094;u2364 975 993 1020 1061;u2379 822 846 993 997;d2394 842 846 964 997;d2407 958 964 1014 1043;d2421 1014 1014 1071 1138;u2436 989 1013 1078 1093;u2451 980 1000 1013 1038;u2465 900 910 1001 1001;u2478 858 897 916 920;u2493 752 761 904 935;d2508 743 762 783 809;u2523 622 646 790 796;u2536 617 629 646 675;d2550 585 636 648 661;u2565 591 596 642 649;u2580 480 542 583 583;d2594 512 536 658 672;u2608 580 604 658 668;d2622 583 612 617 649;u2637 475 480 625 643;d2652 462 474 520 539;d2666 488 514 520 590;d2679 512 525 543 609;u2694 441 499 543 552;u2709 446 470 499 518;u2723 364 408 470 470'],
      ['l', 's-black', '2,418 40,400 95,382 140,363 182,351 235,345 270,349 345,358 385,373 440,404 497,428 527,436 553,450 584,458 626,459 655,456 685,465 770,473 812,494 857,510 912,526 958,537 1000,538 1043,552 1087,555 1160,552 1216,543 1250,531 1273,528 1290,536 1316,544 1360,569 1402,578 1432,592 1460,613 1500,638 1532,655 1568,659 1632,670 1673,666 1690,659 1704,664 1733,659 1747,664 1761,683 1789,738 1804,758 1819,784 1861,844 1876,869 1890,889 1905,897 1918,901 1948,918 1978,928 2005,926 2049,940 2062,940 2108,953 2178,943 2206,932 2223,930 2236,934 2263,956 2318,974 2368,982 2380,974 2408,976 2425,983 2453,985 2483,974 2508,952 2536,918 2580,866 2622,825 2651,792 2694,750 2723,713'],
      ['l', 's-red w2 dash', '2,322 20,318 38,308 60,305 90,311 125,300 155,295 195,295 230,302 255,314 282,336 320,350 352,362 380,390 411,422 440,449 470,471 497,487 527,486 545,502 569,510 584,509 600,501 626,495 655,475 680,485 712,491 740,487 768,491 795,515 812,534 835,543 857,554 900,566 960,577 990,567 1010,569 1043,585 1070,586 1100,573 1160,564 1190,548 1216,530 1245,513 1273,507 1288,530 1316,555 1340,584 1362,606 1402,613 1432,632 1460,674 1500,708 1517,724 1532,727 1576,713 1613,714 1643,705 1660,688 1690,668 1704,677 1733,663 1747,674 1761,724 1783,810 1818,916 1848,994 1861,1010 1876,1053 1890,1071 1918,1050 1933,1045 1962,1049 1977,1041 2005,1003 2049,1012 2063,999 2078,1008 2106,1005 2138,978 2158,965 2178,957 2206,922 2228,926 2263,979 2292,1003 2343,1021 2364,1015 2380,990 2408,992 2423,1003 2453,1004 2478,973 2508,918 2543,832 2580,751 2622,704 2637,670 2658,635 2694,603 2723,557'],
      ['l', 's-red', '0,408 3016,408'], ['l', 's-mag w2 dash', '0,405 3016,405'], ['l', 's-green w2', '0,588 3016,588'], ['l', 's-brown dot', '0,586 3016,586'], ['l', 's-brown w2 dot', '0,1299 3016,1299'], ['t', 't-brown', 7, 573, '(61,80 %)'], ['t', 't-brown', 7, 1286, '(78,60 %)']],
    over: [['m', 2738, 101], ['b', 'f-black', 3017, 317, 3135, 343, '13 981,85', 'bold t-white'], ['b', 'f-mag', 2991, 394, 3040, 415, '13', 't-black'], ['b', 'f-dred', 3017, 390, 3135, 421, '13 976,34', 'big t-white'], [...brown, 2991, 575, 3082, 597, '13 962,66', 'bold t-white'], [...brown, 2991, 1288, 3082, 1309, '13 908,52', 'bold t-white']] } });

/* price tiles */
function tile(o) {
  const big = ([a, b]) => `<strong>${a}<small>${b}</small></strong>`;
  return `<section class="tile"><div class="thead"><button class="cell" aria-label="Menu">${ic('menu')}</button><h2${o.sub ? ' class="t2"' : ''}><span>${o.name}${o.sub ? '<br>' + o.sub : ''}</span>${o.find ? ic('search') : ''}</h2>
    <div class="chg">▲ ${o.pct}<br>${o.pts}</div><i class="depth${o.hot ? ' hot' : ''}"></i><button class="x" aria-label="Fermer">${ic('close')}</button></div>
    <div class="quote"><button class="sell"><em>VENDRE</em>${big(o.s)}<span>B:${o.lo}</span></button><button class="buy"><em>ACHETER</em>${big(o.b)}<span>H:${o.hi}</span></button>
    <b class="mid${o.dn ? ' dn' : ''}">${o.sp}</b><div class="qty"><input aria-label="Quantité" value="${o.q || '-'}"><i>${ic('down')}</i></div></div></section>`;
}
document.getElementById('stack').innerHTML = [
  { name: 'Allemagne 40', hot: 1, pct: '0,3 %', pts: '42,55', s: ['13975,', '34'], b: ['13976,', '34'], lo: '13 899,26', hi: '13 995,05', sp: '1,00', q: '0,01' },
  { name: 'US SPX 500', sub: 'Mar 2023', find: 1, pct: '0,19 %', pts: '7,63', s: ['3855,0', '3'], b: ['3855,7', '3'], lo: '3 837,53', hi: '3 859,23', sp: '7,0' },
  { name: 'US NDAQ 100', sub: 'Mar 2023', pct: '0,14 %', pts: '15,7', s: ['11059,', '1'], b: ['11062,', '1'], lo: '11 009,5', hi: '11 080,1', sp: '3,0' },
  { name: 'US 30', sub: 'Mar 2023', find: 1, pct: '0,3 %', pts: '100,5', s: ['33295,', '5'], b: ['33299,', '5'], lo: '33 134,5', hi: '33 300,0', sp: '4,0' }
].map(tile).join('');
document.getElementById('row').innerHTML = [
  { name: 'US SPX 500', find: 1, pct: '0,19 %', pts: '7,45', s: ['3829,0', '0'], b: ['3829,6', '0'], lo: '3 811,69', hi: '3 833,23', sp: '6,0' },
  { name: 'US NDAQ 100', dn: 1, pct: '0,15 %', pts: '16,79', s: ['10968,', '09'], b: ['10970,', '09'], lo: '10 917,85', hi: '10 987,18', sp: '2,00', q: '0,02' },
  { name: 'US 30', find: 1, dn: 1, pct: '0,3 %', pts: '100,83', s: ['33118,', '43'], b: ['33121,', '43'], lo: '32 957,90', hi: '33 125,75', sp: '3,00' }
].map(tile).join('');
```
